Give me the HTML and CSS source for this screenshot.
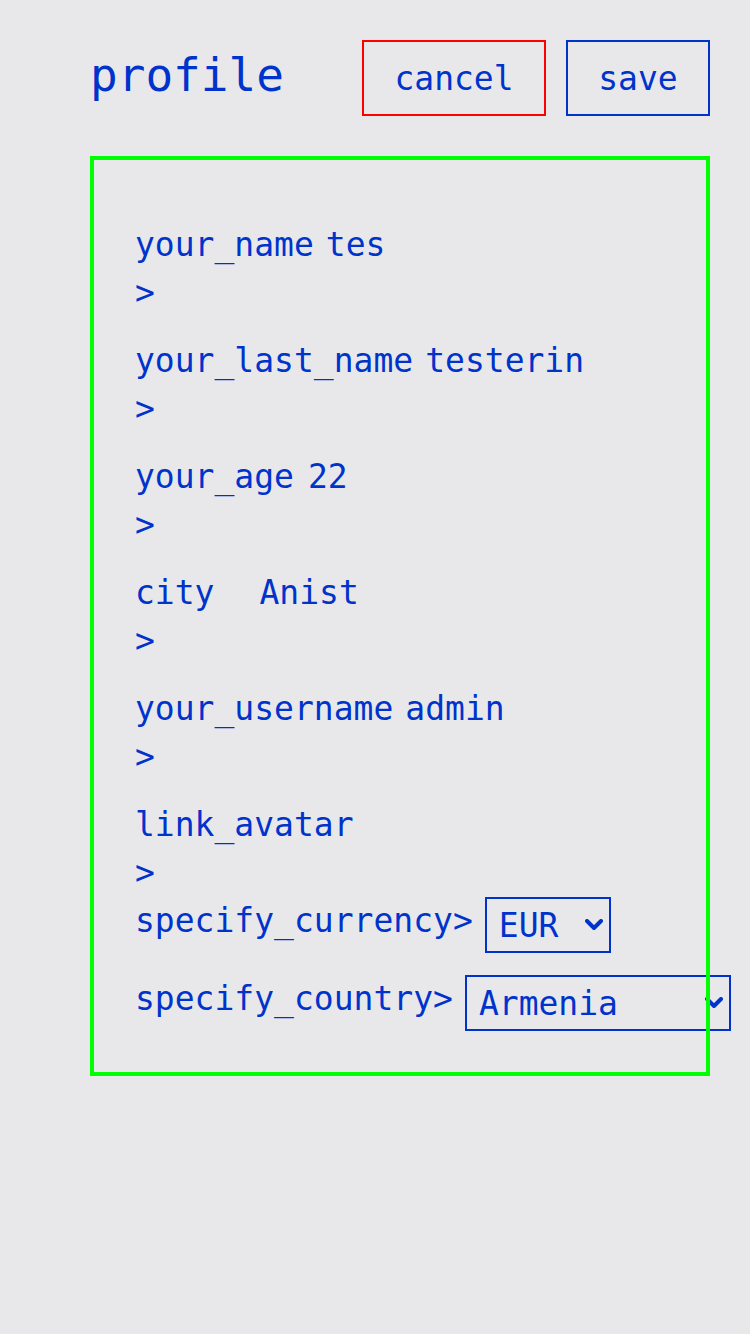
FILE: index.html
```html
<!DOCTYPE html>
<html lang="en">
<head>
<meta charset="utf-8">
<title>profile</title>
<link rel="stylesheet" href="styles.css">
</head>
<body>
<div class="page">
  <header class="header">
    <h1 class="title">profile</h1>
    <div class="actions">
      <button class="btn btn-cancel" type="button">cancel</button>
      <button class="btn btn-save" type="button">save</button>
    </div>
  </header>
  <main class="card">
    <div class="field">
      <div class="line"><span class="label">your_name</span><span class="value">tes</span></div>
      <div class="line">&gt;</div>
    </div>
    <div class="field">
      <div class="line"><span class="label">your_last_name</span><span class="value">testerin</span></div>
      <div class="line">&gt;</div>
    </div>
    <div class="field">
      <div class="line"><span class="label">your_age</span><span class="value value-age">22</span></div>
      <div class="line">&gt;</div>
    </div>
    <div class="field">
      <div class="line"><span class="label">city</span><span class="value value-city">Anist</span></div>
      <div class="line">&gt;</div>
    </div>
    <div class="field">
      <div class="line"><span class="label">your_username</span><span class="value">admin</span></div>
      <div class="line">&gt;</div>
    </div>
    <div class="field field-last">
      <div class="line"><span class="label">link_avatar</span></div>
      <div class="line">&gt;</div>
    </div>
    <div class="select-row">
      <span class="line">specify_currency&gt;</span>
      <div class="select select-currency">
        <select class="select-input"><option>EUR</option></select>
        <svg class="chevron" viewBox="0 0 18 11" width="18" height="11"><path d="M2 2 L9 9 L16 2" fill="none" stroke="currentColor" stroke-width="4" stroke-linecap="round" stroke-linejoin="round"/></svg>
      </div>
    </div>
    <div class="select-row select-row-2">
      <span class="line">specify_country&gt;</span>
      <div class="select select-country">
        <select class="select-input"><option>Armenia</option></select>
        <svg class="chevron" viewBox="0 0 18 11" width="18" height="11"><path d="M2 2 L9 9 L16 2" fill="none" stroke="currentColor" stroke-width="4" stroke-linecap="round" stroke-linejoin="round"/></svg>
      </div>
    </div>
  </main>
</div>
</body>
</html>
```
FILE: styles.css
```css
html, body {
  margin: 0;
  padding: 0;
  background: #e8e8ea;
}
body {
  font-family: "DejaVu Sans Mono", "Liberation Mono", monospace;
  color: #0033cc;
  min-height: 1334px;
}
.page {
  width: 620px;
  margin-left: 90px;
  padding-top: 40px;
}
.header {
  display: flex;
  justify-content: space-between;
  align-items: flex-start;
  height: 76px;
}
.title {
  margin: 0;
  font-size: 46px;
  font-weight: normal;
  line-height: 70px;
}
.actions {
  display: flex;
  gap: 20px;
}
.btn {
  box-sizing: border-box;
  height: 76px;
  padding: 0;
  background: transparent;
  font-family: inherit;
  font-size: 33px;
  line-height: 74px;
  color: #0033cc;
  text-align: center;
  border: 2px solid #0033cc;
  border-radius: 0;
}
.btn-cancel {
  width: 184px;
  border-color: #ff0000;
}
.btn-save {
  width: 144px;
}
.card {
  position: relative;
  display: block;
  box-sizing: border-box;
  width: 620px;
  margin-top: 40px;
  padding: 65px 0 45px 45px;
  font-size: 33px;
}
.card::after {
  content: "";
  position: absolute;
  inset: 0;
  border: 4px solid #00ff00;
  pointer-events: none;
}
.line {
  line-height: 48px;
  height: 48px;
  white-space: nowrap;
}
.field {
  margin-bottom: 20px;
}
.field-last {
  margin-bottom: 0;
}
.value {
  margin-left: 12px;
}
.value-age {
  margin-left: 14px;
}
.value-city {
  margin-left: 45px;
}
.select-row {
  display: flex;
  align-items: flex-start;
  gap: 12px;
}
.select-row-2 {
  margin-top: 22px;
}
.select {
  position: relative;
  flex: none;
}
.select-currency {
  width: 126px;
}
.select-country {
  width: 266px;
}
.select-input {
  display: block;
  box-sizing: border-box;
  width: 100%;
  height: 56px;
  margin: 0;
  padding: 0 0 0 12px;
  appearance: none;
  -webkit-appearance: none;
  background: transparent;
  border: 2px solid #0033cc;
  border-radius: 0;
  font-family: inherit;
  font-size: 33px;
  color: #0033cc;
}
.chevron {
  position: absolute;
  right: 8px;
  top: 22px;
  color: #0033cc;
  pointer-events: none;
}
```
